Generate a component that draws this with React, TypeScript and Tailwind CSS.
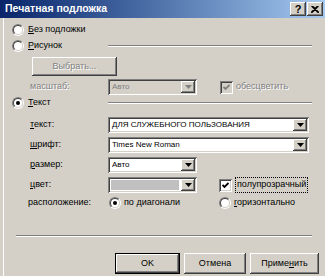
import React from "react";

const raised =
  "shadow-[inset_-1px_-1px_#404040,inset_1px_1px_#ffffff,inset_-2px_-2px_#808080,inset_2px_2px_#d4d0c8]";
const sunken =
  "shadow-[inset_1px_1px_#808080,inset_-1px_-1px_#ffffff,inset_2px_2px_#404040,inset_-2px_-2px_#d4d0c8]";
const dimText = "text-[#808080] [text-shadow:1px_1px_0_#ffffff]";

function Radio({ checked }: { checked?: boolean }) {
  return (
    <span className="flex w-[12px] h-[12px] shrink-0 rounded-full border border-t-[#808080] border-l-[#808080] border-r-white border-b-white">
      <span className="flex flex-1 items-center justify-center rounded-full border border-t-[#404040] border-l-[#404040] border-r-[#d4d0c8] border-b-[#d4d0c8] bg-white">
        {checked && <span className="w-[4px] h-[4px] rounded-full bg-black" />}
      </span>
    </span>
  );
}

function Check({ disabled }: { disabled?: boolean }) {
  return (
    <span
      className={`flex w-[13px] h-[13px] shrink-0 items-center justify-center ${sunken} ${
        disabled ? "bg-[#d4d0c8]" : "bg-white"
      }`}
    >
      <svg width="7" height="7" viewBox="0 0 7 7">
        <path
          d="M0.5 3 L2.5 5 L6.5 1"
          stroke={disabled ? "#808080" : "#000"}
          strokeWidth="1.8"
          fill="none"
        />
      </svg>
    </span>
  );
}

function Combo({
  w,
  text,
  disabled,
  swatch,
}: {
  w: string;
  text?: string;
  disabled?: boolean;
  swatch?: boolean;
}) {
  return (
    <div
      className={`flex h-[16px] p-[2px] ${w} ${sunken} ${
        disabled ? "bg-[#d4d0c8]" : "bg-white"
      }`}
    >
      <div className="flex flex-1 items-center overflow-hidden">
        {swatch ? (
          <div className="ml-[1px] mr-[2px] h-[10px] flex-1 bg-[#c0c0c0]" />
        ) : (
          <span
            className={`pl-[2px] text-[8px] whitespace-nowrap ${
              disabled ? "text-[#808080]" : "text-black"
            }`}
          >
            {text}
          </span>
        )}
      </div>
      <div
        className={`flex w-[14px] items-center justify-center bg-[#d4d0c8] ${raised}`}
      >
        <svg width="7" height="4" viewBox="0 0 7 4">
          <path d="M0 0 H7 L3.5 4 Z" fill={disabled ? "#808080" : "#000"} />
        </svg>
      </div>
    </div>
  );
}

function Etched({ className }: { className: string }) {
  return (
    <div className={`h-[2px] border-t border-t-[#808080] border-b border-b-white ${className}`} />
  );
}

function Btn({
  children,
  w,
  isDefault,
  disabled,
}: {
  children: React.ReactNode;
  w: string;
  isDefault?: boolean;
  disabled?: boolean;
}) {
  return (
    <div className={`flex ${w} ${isDefault ? "border border-black" : ""}`}>
      <div
        className={`flex flex-1 items-center justify-center bg-[#d4d0c8] text-[9px] ${raised} ${
          disabled ? dimText : "text-black"
        }`}
      >
        {children}
      </div>
    </div>
  );
}

export default function App() {
  return (
    <div className="flex flex-col w-[325px] h-[276px] overflow-hidden bg-[#d4d0c8] font-['Liberation_Sans',Arial,sans-serif] text-[9px] text-black">
      <div className="flex h-[18px] shrink-0 items-center bg-gradient-to-r from-[#0a246a] to-[#a6caf0] pl-[5px] pr-[2px]">
        <span className="text-[10.5px] font-bold text-white whitespace-nowrap">
          Печатная подложка
        </span>
        <div className="ml-auto flex">
          <div className={`flex w-[16px] h-[14px] items-center justify-center bg-[#d4d0c8] ${raised}`}>
            <span className="text-[11px] font-bold leading-none">?</span>
          </div>
          <div className={`ml-[1px] flex w-[16px] h-[14px] items-center justify-center bg-[#d4d0c8] ${raised}`}>
            <svg width="8" height="7" viewBox="0 0 8 7">
              <path d="M0.5 0 L7.5 7 M7.5 0 L0.5 7 M1.5 0 L8 6.5 M6.5 0 L0 6.5" stroke="#000" strokeWidth="1.2" />
            </svg>
          </div>
        </div>
      </div>

      <div className="flex flex-1 flex-col ml-[3px] border-l border-white">
        <div className="mt-[5px] flex h-[14px] items-center pl-[8px] gap-[4px]">
          <Radio />
          <span>
            <span className="underline">Б</span>ез подложки
          </span>
        </div>

        <div className="mt-[2px] flex h-[14px] items-center pl-[8px] pr-[13px] gap-[4px]">
          <Radio />
          <span>
            <span className="underline">Р</span>исунок
          </span>
          <Etched className="ml-auto w-[204px]" />
        </div>

        <div className="mt-[4px] flex pl-[28px]">
          <Btn w="w-[85px] h-[19px]" disabled>
            Выбрать...
          </Btn>
        </div>

        <div className="mt-[3px] flex h-[16px] items-center">
          <div className="w-[104px] pl-[26px]">
            <span className={dimText}>масштаб:</span>
          </div>
          <Combo w="w-[89px]" text="Авто" disabled />
          <div className="ml-[23px] flex items-center gap-[3px]">
            <Check disabled />
            <span className={dimText}>обесцветить</span>
          </div>
        </div>

        <div className="mt-[1px] flex h-[14px] items-center pl-[8px] pr-[13px] gap-[4px]">
          <Radio checked />
          <span>
            <span className="underline">Т</span>екст
          </span>
          <Etched className="ml-auto w-[204px]" />
        </div>

        <div className="mt-[7px] flex h-[16px] items-center">
          <div className="w-[104px] pl-[26px]">
            <span className="underline">т</span>екст:
          </div>
          <Combo w="w-[201px]" text="ДЛЯ СЛУЖЕБНОГО ПОЛЬЗОВАНИЯ" />
        </div>

        <div className="mt-[4px] flex h-[16px] items-center">
          <div className="w-[104px] pl-[26px]">
            <span className="underline">ш</span>рифт:
          </div>
          <Combo w="w-[201px]" text="Times New Roman" />
        </div>

        <div className="mt-[4px] flex h-[16px] items-center">
          <div className="w-[104px] pl-[26px]">
            <span className="underline">р</span>азмер:
          </div>
          <Combo w="w-[89px]" text="Авто" />
        </div>

        <div className="mt-[4px] flex h-[16px] items-center">
          <div className="w-[104px] pl-[26px]">
            <span className="underline">ц</span>вет:
          </div>
          <Combo w="w-[89px]" swatch />
          <div className="ml-[22px] flex items-center gap-[3px]">
            <Check />
            <span className="border border-dotted border-black px-[1px]">
              полупрозрачный
            </span>
          </div>
        </div>

        <div className="mt-[3px] flex h-[14px] items-center">
          <div className="w-[105px] pl-[24px]">расположение:</div>
          <div className="flex w-[110px] items-center gap-[3px]">
            <Radio checked />
            <span>
              по <span className="underline">д</span>иагонали
            </span>
          </div>
          <div className="flex items-center gap-[3px]">
            <Radio />
            <span>
              <span className="underline">г</span>оризонтально
            </span>
          </div>
        </div>

        <Etched className="mt-[25px] ml-[12px] w-[296px]" />

        <div className="mt-[16px] flex pl-[111px] gap-[4px]">
          <Btn w="w-[65px] h-[21px]" isDefault>
            OK
          </Btn>
          <Btn w="w-[62px] h-[21px]">Отмена</Btn>
          <Btn w="w-[69px] h-[21px]">
            Приме<span className="underline">н</span>ить
          </Btn>
        </div>
      </div>
    </div>
  );
}
